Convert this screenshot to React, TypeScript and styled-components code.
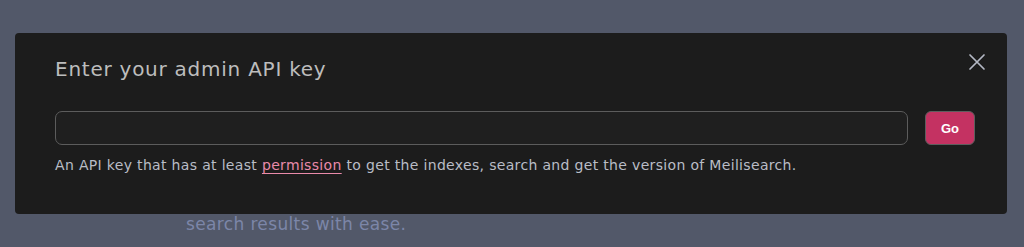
import styled, { createGlobalStyle } from 'styled-components';

const GlobalStyle = createGlobalStyle`
  html, body {
    margin: 0;
    padding: 0;
    background: #525869;
    font-family: 'DejaVu Sans', 'Open Sans', sans-serif;
  }
`;

function App(): JSX.Element {
  return (
    <Page>
      <GlobalStyle />
      <Tagline>search results with ease.</Tagline>
      <Modal>
        <Title>Enter your admin API key</Title>
        <CloseButton aria-label="Close">
          <svg width="18" height="18" viewBox="0 0 18 18" fill="none">
            <path d="M2 2L16 16M16 2L2 16" stroke="#b4b8c4" strokeWidth="1.7" strokeLinecap="round" />
          </svg>
        </CloseButton>
        <Form>
          <KeyInput type="text" />
          <GoButton type="button">Go</GoButton>
        </Form>
        <Help>
          An API key that has at least <HelpLink href="#">permission</HelpLink> to get the
          indexes, search and get the version of Meilisearch.
        </Help>
      </Modal>
    </Page>
  );
}

export default App;

const Page = styled.div`
  position: relative;
  width: 1024px;
  height: 247px;
  overflow: hidden;
  background: #525869;
  padding: 210px 0 0 186px;
  box-sizing: border-box;
`;

const Tagline = styled.p`
  margin: 0;
  font-size: 17px;
  line-height: 28px;
  color: #7c86a8;
  letter-spacing: 0.36px;
`;

const Modal = styled.div`
  position: absolute;
  top: 33px;
  left: 15px;
  width: 992px;
  height: 181px;
  box-sizing: border-box;
  padding: 22px 32px 0 40px;
  background: #1c1c1c;
  border-radius: 4px;
`;

const Title = styled.h2`
  margin: 0;
  font-size: 20px;
  line-height: 28px;
  font-weight: 400;
  color: #bdbdbd;
  letter-spacing: 0.75px;
`;

const CloseButton = styled.button`
  position: absolute;
  top: 16px;
  right: 17px;
  width: 26px;
  height: 26px;
  padding: 0;
  border: 0;
  background: transparent;
  display: flex;
  align-items: center;
  justify-content: center;
  cursor: pointer;
`;

const Form = styled.div`
  display: flex;
  align-items: center;
  gap: 17px;
  margin-top: 28px;
`;

const KeyInput = styled.input`
  flex: 1;
  height: 34px;
  box-sizing: border-box;
  border: 1px solid #5c5c5c;
  border-radius: 7px;
  background: #1f1f1f;
  color: #ddd;
  padding: 0 12px;
  font: inherit;
  outline: none;
`;

const GoButton = styled.button`
  width: 50px;
  height: 34px;
  box-sizing: border-box;
  border: 1px solid #5e5e5e;
  border-radius: 6px;
  background: #c43262;
  color: #fff;
  font-family: 'Liberation Sans', Arial, sans-serif;
  font-weight: 700;
  font-size: 13px;
  cursor: pointer;
`;

const Help = styled.p`
  margin: 9px 0 0;
  font-size: 14px;
  line-height: 22px;
  color: #b9bcc6;
  letter-spacing: 0.33px;
`;

const HelpLink = styled.a`
  color: #e98aaa;
  text-decoration: underline;
  text-underline-offset: 3px;
`;
